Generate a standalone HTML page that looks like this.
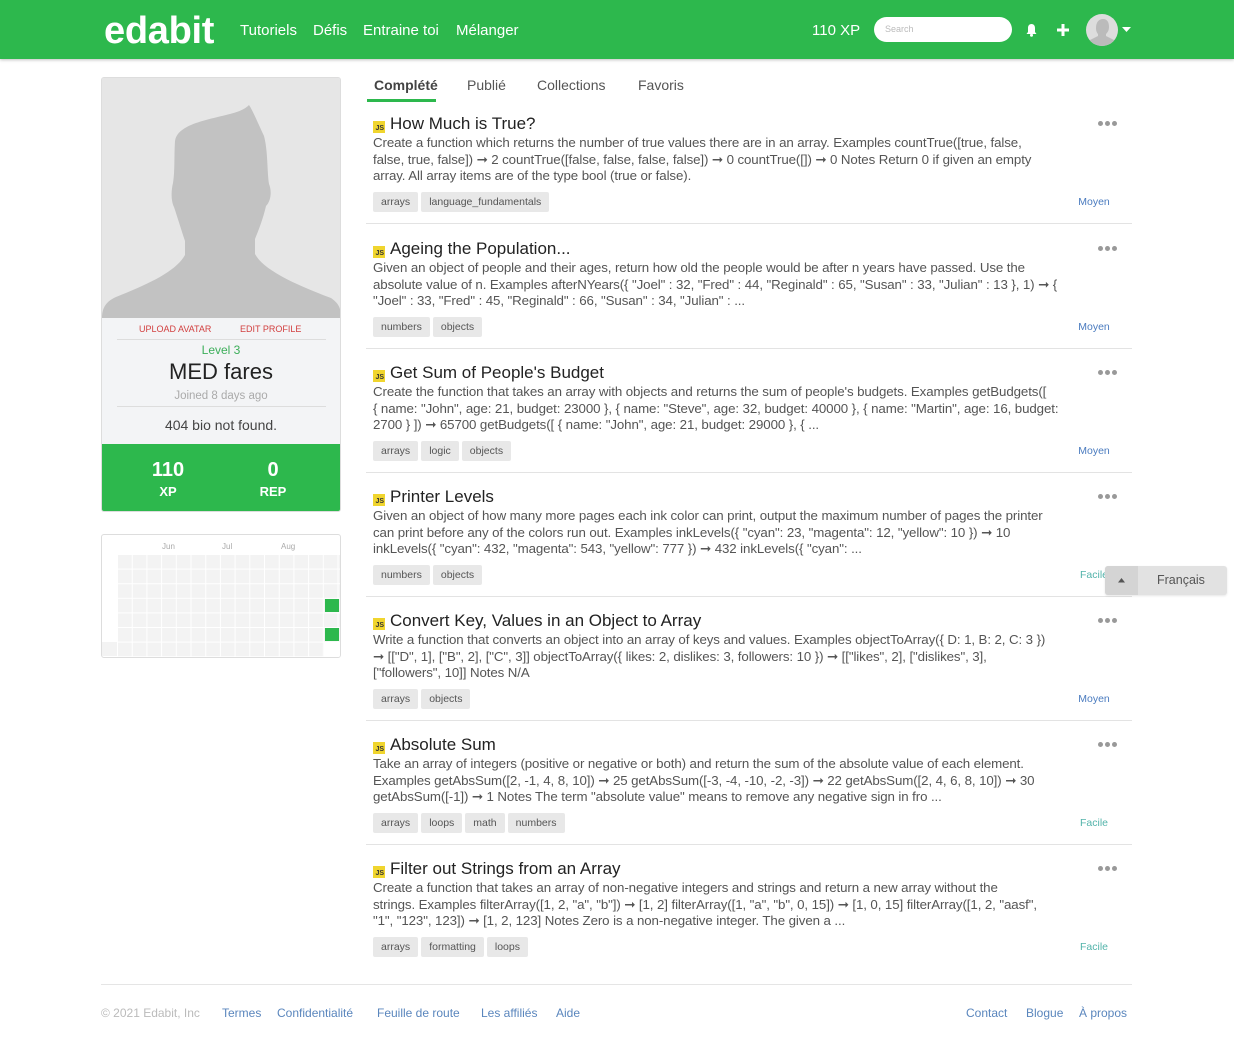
<!DOCTYPE html>
<html><head><meta charset="utf-8">
<style>
*{margin:0;padding:0;box-sizing:border-box}
body{width:1234px;height:1039px;background:#fff;font-family:"Liberation Sans",sans-serif;position:relative;overflow:hidden;color:#333}
.hdr{position:absolute;left:0;top:0;width:1234px;height:59px;background:#2db84d;box-shadow:0 1px 3px rgba(0,0,0,.25)}
.a{position:absolute;white-space:nowrap}
.logo{left:104px;top:10px;font-size:38px;font-weight:bold;color:#fff;letter-spacing:-0.3px}
.nav{top:22px;font-size:15px;color:#fff}
.card{position:absolute;left:366px;width:766px;height:124px}
.card .t{position:absolute;left:7px;top:1px;height:24px;line-height:24px;font-size:17px;color:#222;white-space:nowrap}
.js{display:inline-block;width:12px;height:12px;background:#f0d52e;font-size:7px;font-weight:bold;color:#333;line-height:15px;text-align:right;padding-right:1px;vertical-align:-1px;margin-right:5px}
.card .d{position:absolute;left:7px;top:24px;font-size:13.3px;line-height:16.5px;color:#555;white-space:nowrap;letter-spacing:-0.1px}
.tags{position:absolute;left:7px;top:81px;display:flex}
.tag{height:20px;line-height:20px;padding:0 8px;background:#e8e8e8;border-radius:2px;font-size:10.5px;color:#555;margin-right:3px}
.dots{position:absolute;left:732px;top:10px;display:flex}
.dots i{width:5px;height:5px;border-radius:50%;background:#999;margin-right:2px}
.lv{position:absolute;right:8px;top:85px;font-size:10.5px;color:#4a7bbf;width:60px;text-align:center}
.lv.f{color:#52b3aa}
.sep{position:absolute;left:0;top:112px;width:766px;height:1px;background:#e3e3e3}
.ft{position:absolute;top:1006px;font-size:12px;color:#5a86bd}
</style></head><body>
<div class="hdr"></div>
<div class="a logo">edabit</div>
<div class="a nav" style="left:240px">Tutoriels</div>
<div class="a nav" style="left:313px">Défis</div>
<div class="a nav" style="left:363px">Entraine toi</div>
<div class="a nav" style="left:456px">Mélanger</div>
<div class="a nav" style="left:812px">110 XP</div>
<div class="a" style="left:874px;top:17px;width:138px;height:25px;background:#fff;border-radius:13px;font-size:9px;color:#bbb;line-height:25px;padding-left:11px">Search</div>
<svg class="a" style="left:1025px;top:23px" width="13" height="14" viewBox="0 0 13 14"><path d="M6.5 1C4 1 3 3 3 5v4L1.5 11h10L10 9V5C10 3 9 1 6.5 1z" fill="#fff"/><circle cx="6.5" cy="12.3" r="1.5" fill="#fff"/></svg>
<svg class="a" style="left:1057px;top:24px" width="12" height="12"><rect x="4.5" y="0" width="3" height="12" fill="#fff"/><rect x="0" y="4.5" width="12" height="3" fill="#fff"/></svg>
<div class="a" style="left:1086px;top:14px;width:32px;height:32px;border-radius:50%;background:#ddd;overflow:hidden"><svg width="32" height="32"><path d="M10 14c0-6 3-9 7-9s6 3 6 8c0 4-2 6-3 7v2l8 4v6H4v-6l8-4v-2c-1-1-2-3-2-6z" fill="#bbb"/></svg></div>
<svg class="a" style="left:1122px;top:27px" width="9" height="6"><path d="M0 0h9L4.5 5z" fill="#fff"/></svg>

<!-- profile -->
<div class="a" style="left:101px;top:77px;width:240px;height:435px;border:1px solid #ddd;border-radius:3px;background:#f3f4f6;overflow:hidden">
 <div style="position:absolute;left:0;top:0;width:240px;height:240px;background:#e6e6e6">
  <svg width="240" height="240" viewBox="101 77 240 240" style="position:absolute;left:0;top:0"><path d="M174 140C176 125 200 120 225 114C238 111 244 108 248 104C252 110 256 120 263 135C267 150 266 170 268 183C271 190 270 200 265 205C262 218 258 228 254 238L254 253C262 268 290 282 330 297C337 302 340 306 340 317L101 317C101 306 106 300 115 296C150 282 175 270 184 254L184 240C180 228 177 218 173 206C170 200 170 190 172 182C174 170 173 155 174 140Z" fill="#c2c2c2"/></svg>
 </div>
 <div class="a" style="left:37px;top:246px;font-size:9px;color:#d23f3f">UPLOAD AVATAR</div>
 <div class="a" style="left:138px;top:246px;font-size:9px;color:#d23f3f">EDIT PROFILE</div>
 <div style="position:absolute;left:15px;top:261px;width:209px;height:1px;background:#ddd"></div>
 <div class="a" style="left:0;width:238px;text-align:center;top:265px;font-size:12px;color:#3cae5a">Level 3</div>
 <div class="a" style="left:0;width:238px;text-align:center;top:281px;font-size:22px;color:#222">MED fares</div>
 <div class="a" style="left:0;width:238px;text-align:center;top:312px;font-size:11.5px;color:#aaa">Joined 8 days ago</div>
 <div style="position:absolute;left:15px;top:328px;width:209px;height:1px;background:#ddd"></div>
 <div class="a" style="left:0;width:238px;text-align:center;top:339px;font-size:14px;color:#444">404 bio not found.</div>
 <div style="position:absolute;left:0;top:366px;width:240px;height:68px;background:#2db84d"></div>
 <div class="a" style="left:36px;width:60px;text-align:center;top:381px;font-size:20px;font-weight:bold;color:#fff">110</div>
 <div class="a" style="left:36px;width:60px;text-align:center;top:406px;font-size:13px;font-weight:bold;color:#fff">XP</div>
 <div class="a" style="left:141px;width:60px;text-align:center;top:381px;font-size:20px;font-weight:bold;color:#fff">0</div>
 <div class="a" style="left:141px;width:60px;text-align:center;top:406px;font-size:13px;font-weight:bold;color:#fff">REP</div>
</div>
<div class="a" style="left:101px;top:534px;width:240px;height:124px;border:1px solid #ddd;border-radius:3px;overflow:hidden">
 <div class="a" style="left:60px;top:7px;font-size:8px;color:#aaa">Jun</div>
 <div class="a" style="left:120px;top:7px;font-size:8px;color:#aaa">Jul</div>
 <div class="a" style="left:179px;top:7px;font-size:8px;color:#aaa">Aug</div>
 <svg class="a" style="left:0;top:0" width="240" height="124">
  <defs><pattern id="g" x="16" y="20" width="14.7" height="14.6" patternUnits="userSpaceOnUse"><rect x="0" y="0" width="13.7" height="13.6" fill="#f3f3f3"/></pattern></defs>
  <rect x="16" y="20" width="222" height="102" fill="url(#g)"/>
  <rect x="0" y="107" width="15" height="14" fill="#f3f3f3"/>
  <rect x="222" y="107" width="18" height="16" fill="#fff"/>
  <rect x="223" y="64" width="14" height="13" fill="#2db84d"/>
  <rect x="223" y="93" width="14" height="13" fill="#2db84d"/>
 </svg>
</div>

<!-- tabs -->
<div class="a" style="left:374px;top:77px;font-size:14px;font-weight:bold;color:#444">Complété</div>
<div class="a" style="left:467px;top:77px;font-size:14px;color:#555">Publié</div>
<div class="a" style="left:537px;top:77px;font-size:14px;color:#555">Collections</div>
<div class="a" style="left:638px;top:77px;font-size:14px;color:#555">Favoris</div>
<div class="a" style="left:367px;top:99px;width:69px;height:3px;background:#2db84d"></div>

<div class="card" style="top:111px"><div class="t"><span class="js">JS</span>How Much is True?</div>
<div class="d">Create a function which returns the number of true values there are in an array. Examples countTrue([true, false,<br>false, true, false]) ➞ 2 countTrue([false, false, false, false]) ➞ 0 countTrue([]) ➞ 0 Notes Return 0 if given an empty<br>array. All array items are of the type bool (true or false).</div>
<div class="tags"><span class="tag">arrays</span><span class="tag">language_fundamentals</span></div><div class="dots"><i></i><i></i><i></i></div><div class="lv">Moyen</div><div class="sep"></div></div>

<div class="card" style="top:236px"><div class="t"><span class="js">JS</span>Ageing the Population...</div>
<div class="d">Given an object of people and their ages, return how old the people would be after n years have passed. Use the<br>absolute value of n. Examples afterNYears({ "Joel" : 32, "Fred" : 44, "Reginald" : 65, "Susan" : 33, "Julian" : 13 }, 1) ➞ {<br>"Joel" : 33, "Fred" : 45, "Reginald" : 66, "Susan" : 34, "Julian" : ...</div>
<div class="tags"><span class="tag">numbers</span><span class="tag">objects</span></div><div class="dots"><i></i><i></i><i></i></div><div class="lv">Moyen</div><div class="sep"></div></div>

<div class="card" style="top:360px"><div class="t"><span class="js">JS</span>Get Sum of People's Budget</div>
<div class="d">Create the function that takes an array with objects and returns the sum of people's budgets. Examples getBudgets([<br>{ name: "John", age: 21, budget: 23000 }, { name: "Steve", age: 32, budget: 40000 }, { name: "Martin", age: 16, budget:<br>2700 } ]) ➞ 65700 getBudgets([ { name: "John", age: 21, budget: 29000 }, { ...</div>
<div class="tags"><span class="tag">arrays</span><span class="tag">logic</span><span class="tag">objects</span></div><div class="dots"><i></i><i></i><i></i></div><div class="lv">Moyen</div><div class="sep"></div></div>

<div class="card" style="top:484px"><div class="t"><span class="js">JS</span>Printer Levels</div>
<div class="d">Given an object of how many more pages each ink color can print, output the maximum number of pages the printer<br>can print before any of the colors run out. Examples inkLevels({ "cyan": 23, "magenta": 12, "yellow": 10 }) ➞ 10<br>inkLevels({ "cyan": 432, "magenta": 543, "yellow": 777 }) ➞ 432 inkLevels({ "cyan": ...</div>
<div class="tags"><span class="tag">numbers</span><span class="tag">objects</span></div><div class="dots"><i></i><i></i><i></i></div><div class="lv f">Facile</div><div class="sep"></div></div>

<div class="card" style="top:608px"><div class="t"><span class="js">JS</span>Convert Key, Values in an Object to Array</div>
<div class="d">Write a function that converts an object into an array of keys and values. Examples objectToArray({ D: 1, B: 2, C: 3 })<br>➞ [["D", 1], ["B", 2], ["C", 3]] objectToArray({ likes: 2, dislikes: 3, followers: 10 }) ➞ [["likes", 2], ["dislikes", 3],<br>["followers", 10]] Notes N/A</div>
<div class="tags"><span class="tag">arrays</span><span class="tag">objects</span></div><div class="dots"><i></i><i></i><i></i></div><div class="lv">Moyen</div><div class="sep"></div></div>

<div class="card" style="top:732px"><div class="t"><span class="js">JS</span>Absolute Sum</div>
<div class="d">Take an array of integers (positive or negative or both) and return the sum of the absolute value of each element.<br>Examples getAbsSum([2, -1, 4, 8, 10]) ➞ 25 getAbsSum([-3, -4, -10, -2, -3]) ➞ 22 getAbsSum([2, 4, 6, 8, 10]) ➞ 30<br>getAbsSum([-1]) ➞ 1 Notes The term "absolute value" means to remove any negative sign in fro ...</div>
<div class="tags"><span class="tag">arrays</span><span class="tag">loops</span><span class="tag">math</span><span class="tag">numbers</span></div><div class="dots"><i></i><i></i><i></i></div><div class="lv f">Facile</div><div class="sep"></div></div>

<div class="card" style="top:856px"><div class="t"><span class="js">JS</span>Filter out Strings from an Array</div>
<div class="d">Create a function that takes an array of non-negative integers and strings and return a new array without the<br>strings. Examples filterArray([1, 2, "a", "b"]) ➞ [1, 2] filterArray([1, "a", "b", 0, 15]) ➞ [1, 0, 15] filterArray([1, 2, "aasf",<br>"1", "123", 123]) ➞ [1, 2, 123] Notes Zero is a non-negative integer. The given a ...</div>
<div class="tags"><span class="tag">arrays</span><span class="tag">formatting</span><span class="tag">loops</span></div><div class="dots"><i></i><i></i><i></i></div><div class="lv f">Facile</div></div>

<!-- language widget -->
<div class="a" style="left:1105px;top:566px;width:122px;height:29px;background:#e2e2e2;border-radius:3px;box-shadow:0 1px 2px rgba(0,0,0,.1)">
 <div style="position:absolute;left:0;top:0;width:33px;height:29px;background:#d4d4d4;border-radius:3px 0 0 3px"></div>
 <svg style="position:absolute;left:13px;top:12px" width="7" height="5"><path d="M0 4.5L3.5 0L7 4.5z" fill="#555"/></svg>
 <div class="a" style="left:52px;top:7px;font-size:12.5px;color:#555">Français</div>
</div>

<div class="a" style="left:101px;top:984px;width:1031px;height:1px;background:#e5e5e5"></div>
<div class="ft" style="left:101px;color:#bbb">© 2021 Edabit, Inc</div>
<div class="ft" style="left:222px">Termes</div>
<div class="ft" style="left:277px">Confidentialité</div>
<div class="ft" style="left:377px">Feuille de route</div>
<div class="ft" style="left:481px">Les affiliés</div>
<div class="ft" style="left:556px">Aide</div>
<div class="ft" style="left:966px">Contact</div>
<div class="ft" style="left:1026px">Blogue</div>
<div class="ft" style="left:1079px">À propos</div>
</body></html>
